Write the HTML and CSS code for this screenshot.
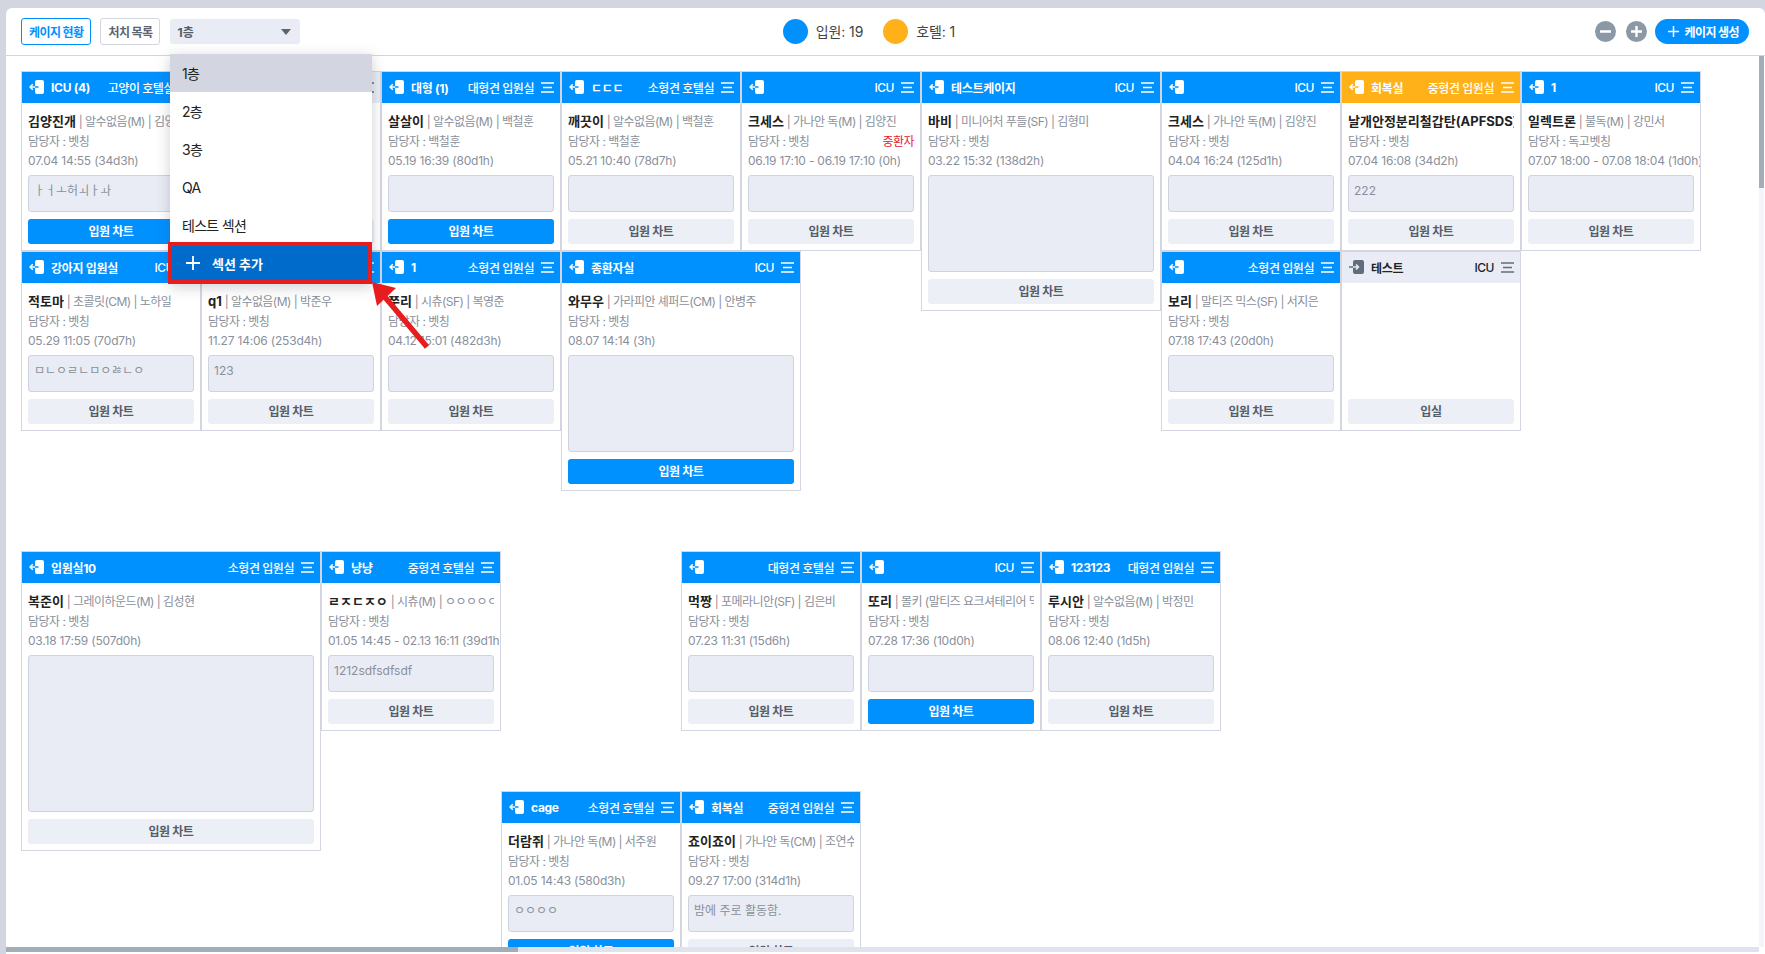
FILE: index.html

```html
<!DOCTYPE html>
<html lang="ko">
<head>
  <meta charset="UTF-8">
  <title>케이지 현황</title>
  <link rel="stylesheet" href="styles.css">
</head>
<body>
  <div class="panel">
    <div class="toolbar">
      <div class="tool-left">
        <button class="tab tab-on">케이지 현황</button>
        <button class="tab">처치 목록</button>
        <div class="select"><span>1층</span><i class="caret"></i></div>
      </div>
      <div class="legend">
        <i class="dot dot-blue"></i><span class="legend-text">입원: 19</span>
        <i class="dot dot-orange"></i><span class="legend-text">호텔: 1</span>
      </div>
      <div class="tool-right">
        <button class="zoom-btn"><svg viewBox="0 0 21 21"><path d="M5 10.5h11" /></svg></button>
        <button class="zoom-btn"><svg viewBox="0 0 21 21"><path d="M5 10.5h11M10.5 5v11" /></svg></button>
        <button class="create-btn"><svg viewBox="0 0 14 14"><path d="M7 1v12M1 7h12" /></svg>케이지 생성</button>
      </div>
    </div>

    <div class="canvas" id="canvas"></div>

    <ul class="menu">
      <li class="menu-item menu-on">1층</li>
      <li class="menu-item">2층</li>
      <li class="menu-item">3층</li>
      <li class="menu-item">QA</li>
      <li class="menu-item">테스트 섹션</li>
      <li class="menu-add"><svg viewBox="0 0 16 16"><path d="M8 1v14M1 8h14" /></svg>섹션 추가</li>
    </ul>

    <svg class="callout" viewBox="0 0 100 100">
      <path d="M59 67L16 16" class="callout-line" />
      <path d="M4 2L28 8L9 26Z" class="callout-head" />
    </svg>

    <div class="vbar"><div class="vbar-thumb"></div></div>
    <div class="hbar"><div class="hbar-thumb"></div></div>
  </div>
  <script src="script.js"></script>
</body>
</html>
```

FILE: styles.css

```css
* {
  box-sizing: border-box;
}
html, body {
  height: 100%;
  margin: 0;
  overflow: hidden;
}
body {
  background: #d3d6e1;
  padding: 8px 0 0 6px;
  font-family: "Inter", "Noto Sans CJK KR", sans-serif;
  font-size: 12px;
  color: #222;
}
button {
  font-family: inherit;
  cursor: pointer;
}
.panel {
  position: relative;
  height: 946px;
  background: #fff;
  border-radius: 6px 6px 0 0;
  overflow: hidden;
}

.toolbar {
  display: flex;
  align-items: center;
  justify-content: space-between;
  height: 48px;
  padding: 0 16px 1px 15px;
  border-bottom: 1px solid #d3d6e1;
}
.tool-left,
.tool-right {
  display: flex;
  align-items: center;
}
.tool-left {
  width: 500px;
}
.tool-right {
  justify-content: flex-end;
  width: 532px;
}
.tab {
  height: 27px;
  margin-right: 9px;
  padding: 0 7px;
  background: #fff;
  border: 1px solid #d3d6e1;
  border-radius: 3px;
  color: #5c6470;
  font-size: 12px;
  font-weight: 700;
  letter-spacing: -0.6px;
}
.tab-on {
  border-color: #0091ff;
  color: #0091ff;
}
.select {
  display: flex;
  align-items: center;
  justify-content: space-between;
  width: 130px;
  height: 25px;
  margin-left: 1px;
  padding: 0 9px 0 7px;
  background: #e9ecf4;
  border-radius: 3px;
  color: #555d6a;
  font-weight: 700;
  font-size: 12px;
}
.caret {
  margin-top: 2px;
  border-left: 5px solid transparent;
  border-right: 5px solid transparent;
  border-top: 6px solid #5c6470;
}
.legend {
  display: flex;
  align-items: center;
}
.dot {
  width: 25px;
  height: 25px;
  border-radius: 50%;
}
.dot-blue {
  background: #0091ff;
}
.dot-orange {
  background: #ffb11a;
}
.legend-text {
  margin: 0 20px 0 8px;
  font-size: 14px;
  color: #444;
  letter-spacing: -0.1px;
}
.legend-text:last-child {
  margin-right: 0;
}
.zoom-btn {
  display: flex;
  width: 21px;
  height: 21px;
  margin-right: 10px;
  padding: 0;
  border: 0;
  border-radius: 50%;
  background: #8b98a6;
}
.zoom-btn svg {
  width: 21px;
  height: 21px;
  fill: none;
  stroke: #fff;
  stroke-width: 2.4;
}
.zoom-btn + .create-btn {
  margin-left: -2px;
}
.create-btn {
  display: flex;
  align-items: center;
  height: 25px;
  padding: 0 10px 0 12px;
  background: #0091ff;
  border: 0;
  border-radius: 13px;
  color: #fff;
  font-size: 12px;
  font-weight: 700;
  letter-spacing: -0.6px;
}
.create-btn svg {
  width: 13px;
  height: 13px;
  margin-right: 5px;
  fill: none;
  stroke: #fff;
  stroke-width: 1.6;
}

/* 케이지 배치 영역 */
.canvas {
  position: absolute;
  top: 48px;
  left: 0;
  right: 6px;
  height: 891px;
  overflow: hidden;
}
.cage {
  position: absolute;
  display: flex;
  flex-direction: column;
  background: #fff;
  border: 1px solid #d3d6e1;
  overflow: hidden;
}
.cage-head {
  display: flex;
  align-items: center;
  flex: none;
  height: 31px;
  padding: 0 6px 1px 7px;
  background: #0091ff;
  color: #fff;
}
.cage-head.hotel {
  background: #ffb11a;
}
.cage-head.off {
  background: #e9ecf4;
  color: #222;
}
.door {
  flex: none;
  width: 15px;
  height: 14px;
  margin-right: 7px;
}
.door-body {
  fill: #fff;
}
.door-arrow,
.door-cut {
  fill: none;
  stroke: #fff;
  stroke-width: 1.5;
}
.door-cut {
  stroke: #0091ff;
}
.hotel .door-cut {
  stroke: #ffb11a;
}
.off .door-body {
  fill: #5f6e7e;
}
.off .door-arrow {
  stroke: #5f6e7e;
}
.off .door-cut {
  stroke: #e9ecf4;
}
.cage-title {
  flex: none;
  font-weight: 700;
  letter-spacing: -0.3px;
}
.cage-type {
  flex: 1;
  min-width: 0;
  margin-right: 7px;
  text-align: right;
  white-space: nowrap;
  font-weight: 500;
  letter-spacing: -0.45px;
}
.lines {
  flex: none;
  width: 13px;
  height: 11px;
  fill: none;
  stroke: #fff;
  stroke-width: 1.4;
}
.off .lines {
  stroke: #5f6e7e;
}
.cage-body {
  display: flex;
  flex-direction: column;
  flex: 1;
  min-height: 0;
  padding: 8px 6px 6px;
}
.pet {
  flex: none;
  height: 20px;
  margin-bottom: 1px;
  line-height: 20px;
  color: #8a909b;
  white-space: nowrap;
  overflow: hidden;
  letter-spacing: -0.55px;
}
.pet b {
  color: #222;
  font-size: 13px;
  letter-spacing: 0;
}
.meta {
  display: flex;
  flex: none;
  justify-content: space-between;
  height: 19px;
  line-height: 19px;
  color: #8a909b;
  white-space: nowrap;
  letter-spacing: -0.2px;
}
.meta-staff {
  letter-spacing: -0.5px;
}
.alert {
  color: #e8212d;
}
.memo {
  flex: 1;
  min-height: 0;
  margin-top: 5px;
  padding: 5px;
  background: #e9ecf4;
  border: 1px solid #cfd3de;
  border-radius: 3px;
  color: #8a909b;
  line-height: 20px;
  white-space: nowrap;
  overflow: hidden;
}
.chart-btn {
  flex: none;
  height: 25px;
  margin-top: 7px;
  padding-bottom: 4px;
  background: #ecEff5;
  border: 0;
  border-radius: 3px;
  color: #555d6a;
  font-size: 12px;
  font-weight: 700;
  letter-spacing: -0.4px;
}
.chart-btn.on {
  background: #0091ff;
  color: #fff;
}
.spacer {
  flex: 1;
}

/* 층 선택 메뉴 */
.menu {
  position: absolute;
  top: 46px;
  left: 164px;
  width: 202px;
  margin: 0;
  padding: 0;
  list-style: none;
  background: #fff;
  border-radius: 3px 3px 0 0;
  box-shadow: 0 3px 14px rgba(60, 65, 80, 0.25);
}
.menu-item {
  height: 38px;
  padding: 0 12px;
  line-height: 40px;
  font-size: 14px;
  color: #222;
  letter-spacing: -0.7px;
}
.menu-on {
  background: #d3d6e1;
}
.menu-add {
  display: flex;
  align-items: center;
  width: 204px;
  height: 42px;
  margin: -2px 0 0 -2px;
  padding-left: 13px;
  background: #006bcb;
  border: 4px solid #e71c1f;
  color: #fff;
  font-size: 13px;
  font-weight: 700;
  letter-spacing: 0;
}
.menu-add svg {
  width: 16px;
  height: 16px;
  margin-right: 11px;
  fill: none;
  stroke: #fff;
  stroke-width: 1.8;
}
.callout {
  position: absolute;
  top: 272px;
  left: 362px;
  width: 100px;
  height: 100px;
}
.callout-line {
  fill: none;
  stroke: #e71c1f;
  stroke-width: 5.5;
}
.callout-head {
  fill: #e71c1f;
}

.vbar {
  position: absolute;
  top: 48px;
  right: 1px;
  bottom: 7px;
  width: 5px;
  background: #f4f5f8;
}
.vbar-thumb {
  width: 5px;
  height: 132px;
  background: #a2adb8;
}
.hbar {
  position: absolute;
  left: 0;
  right: 6px;
  bottom: 2px;
  height: 5px;
  background: #e0e3ee;
}
.hbar-thumb {
  width: 512px;
  height: 5px;
  background: #a2adb8;
}
```

FILE: script.js

```js
// x, y: 화면 좌표 (격자 180 단위)
const cages = [
  { x: 21, y: 71, title: "ICU (4)", type: "고양이 호텔실", name: "김양진개", breed: "알수없음(M)", owner: "김양진", staff: "벳칭", date: "07.04 14:55 (34d3h)", memo: "ㅏㅓㅗ허ㅚㅏㅘ", on: true },
  { x: 201, y: 71, off: true, title: "", type: "ICU", empty: true },
  { x: 381, y: 71, title: "대형 (1)", type: "대형견 입원실", name: "살살이", breed: "알수없음(M)", owner: "백철훈", staff: "백철훈", date: "05.19 16:39 (80d1h)", on: true },
  { x: 561, y: 71, title: "ㄷㄷㄷ", type: "소형견 호텔실", name: "깨끗이", breed: "알수없음(M)", owner: "백철훈", staff: "백철훈", date: "05.21 10:40 (78d7h)" },
  { x: 741, y: 71, title: "", type: "ICU", name: "크세스", breed: "가나안 독(M)", owner: "김양진", staff: "벳칭", alert: "중환자", date: "06.19 17:10 - 06.19 17:10 (0h)" },
  { x: 921, y: 71, size: 240, title: "테스트케이지", type: "ICU", name: "바비", breed: "미니어처 푸들(SF)", owner: "김형미", staff: "벳칭", date: "03.22 15:32 (138d2h)" },
  { x: 1161, y: 71, title: "", type: "ICU", name: "크세스", breed: "가나안 독(M)", owner: "김양진", staff: "벳칭", date: "04.04 16:24 (125d1h)" },
  { x: 1341, y: 71, hotel: true, title: "회복실", type: "중형견 입원실", name: "날개안정분리철갑탄(APFSDS)", breed: "알수없음(M)", owner: "김양진", staff: "벳칭", date: "07.04 16:08 (34d2h)", memo: "222" },
  { x: 1521, y: 71, title: "1", type: "ICU", name: "일렉트론", breed: "불독(M)", owner: "강민서", staff: "독고벳칭", date: "07.07 18:00 - 07.08 18:04 (1d0h)" },

  { x: 21, y: 251, title: "강아지 입원실", type: "ICU", name: "적토마", breed: "초콜릿(CM)", owner: "노하일", staff: "벳칭", date: "05.29 11:05 (70d7h)", memo: "ㅁㄴㅇㄹㄴㅁㅇㅀㄴㅇ" },
  { x: 201, y: 251, title: "", type: "ICU", name: "q1", breed: "알수없음(M)", owner: "박준우", staff: "벳칭", date: "11.27 14:06 (253d4h)", memo: "123" },
  { x: 381, y: 251, title: "1", type: "소형견 입원실", name: "쭈리", breed: "시츄(SF)", owner: "복영준", staff: "벳칭", date: "04.12 15:01 (482d3h)" },
  { x: 561, y: 251, size: 240, title: "종환자실", type: "ICU", name: "와무우", breed: "가라피안 셰퍼드(CM)", owner: "안병주", staff: "벳칭", date: "08.07 14:14 (3h)", on: true },
  { x: 1161, y: 251, title: "", type: "소형견 입원실", name: "보리", breed: "말티즈 믹스(SF)", owner: "서지은", staff: "벳칭", date: "07.18 17:43 (20d0h)" },
  { x: 1341, y: 251, off: true, title: "테스트", type: "ICU", empty: true },

  { x: 21, y: 551, size: 300, title: "입원실10", type: "소형견 입원실", name: "복준이", breed: "그레이하운드(M)", owner: "김성현", staff: "벳칭", date: "03.18 17:59 (507d0h)" },
  { x: 321, y: 551, title: "냥냥", type: "중형견 호텔실", name: "ㄹㅈㄷㅈㅇ", breed: "시츄(M)", owner: "ㅇㅇㅇㅇㅇㅇ", staff: "벳칭", date: "01.05 14:45 - 02.13 16:11 (39d1h)", memo: "1212sdfsdfsdf" },
  { x: 681, y: 551, title: "", type: "대형견 호텔실", name: "먹짱", breed: "포메라니안(SF)", owner: "김은비", staff: "벳칭", date: "07.23 11:31 (15d6h)" },
  { x: 861, y: 551, title: "", type: "ICU", name: "또리", breed: "몰키 (말티즈 요크셔테리어 믹스)", owner: "", staff: "벳칭", date: "07.28 17:36 (10d0h)", on: true },
  { x: 1041, y: 551, title: "123123", type: "대형견 입원실", name: "루시안", breed: "알수없음(M)", owner: "박정민", staff: "벳칭", date: "08.06 12:40 (1d5h)" },

  { x: 501, y: 791, title: "cage", type: "소형견 호텔실", name: "더람쥐", breed: "가나안 독(M)", owner: "서주원", staff: "벳칭", date: "01.05 14:43 (580d3h)", memo: "ㅇㅇㅇㅇ", on: true },
  { x: 681, y: 791, title: "회복실", type: "중형견 입원실", name: "죠이죠이", breed: "가나안 독(CM)", owner: "조연수", staff: "벳칭", date: "09.27 17:00 (314d1h)", memo: "밤에 주로 활동함." }
];

const doorIn = '<svg class="door" viewBox="0 0 15 14"><path class="door-arrow" d="M1 7h5M3.8 4.2L1 7l2.8 2.8"/><rect class="door-body" x="6" y="0" width="9" height="14" rx="2"/><path class="door-cut" d="M6 7h3.5"/></svg>';
const doorOff = '<svg class="door" viewBox="0 0 15 14"><path class="door-arrow" d="M0 7h4"/><rect class="door-body" x="4" y="0" width="11" height="14" rx="2"/><path class="door-cut" d="M4 7h5.5M7 4.5L9.5 7 7 9.5"/></svg>';
const lines = '<svg class="lines" viewBox="0 0 13 11"><path d="M0 1h13M2 5.5h9M0 10h13"/></svg>';

function cageHtml(c) {
  const head = c.off ? "off" : c.hotel ? "hotel" : "";
  const top = `<div class="cage-head ${head}">${c.off ? doorOff : doorIn}<span class="cage-title">${c.title}</span><span class="cage-type">${c.type}</span>${lines}</div>`;

  if (c.empty) {
    return `${top}<div class="cage-body"><div class="spacer"></div><button class="chart-btn">입실</button></div>`;
  }

  const owner = c.owner ? ` | ${c.owner}` : "";
  const alert = c.alert ? `<span class="alert">${c.alert}</span>` : "";
  return `${top}<div class="cage-body">
    <div class="pet"><b>${c.name}</b> | ${c.breed}${owner}</div>
    <div class="meta meta-staff"><span>담당자 : ${c.staff}</span>${alert}</div>
    <div class="meta"><span>${c.date}</span></div>
    <div class="memo">${c.memo || ""}</div>
    <button class="chart-btn ${c.on ? "on" : ""}">입원 차트</button>
  </div>`;
}

const canvas = document.getElementById("canvas");
cages.forEach(function (c) {
  const size = c.size || 180;
  const el = document.createElement("div");
  el.className = "cage";
  el.style.left = c.x - 6 + "px";
  el.style.top = c.y - 56 + "px";
  el.style.width = size + "px";
  el.style.height = size + "px";
  el.innerHTML = cageHtml(c);
  canvas.appendChild(el);
});
```
